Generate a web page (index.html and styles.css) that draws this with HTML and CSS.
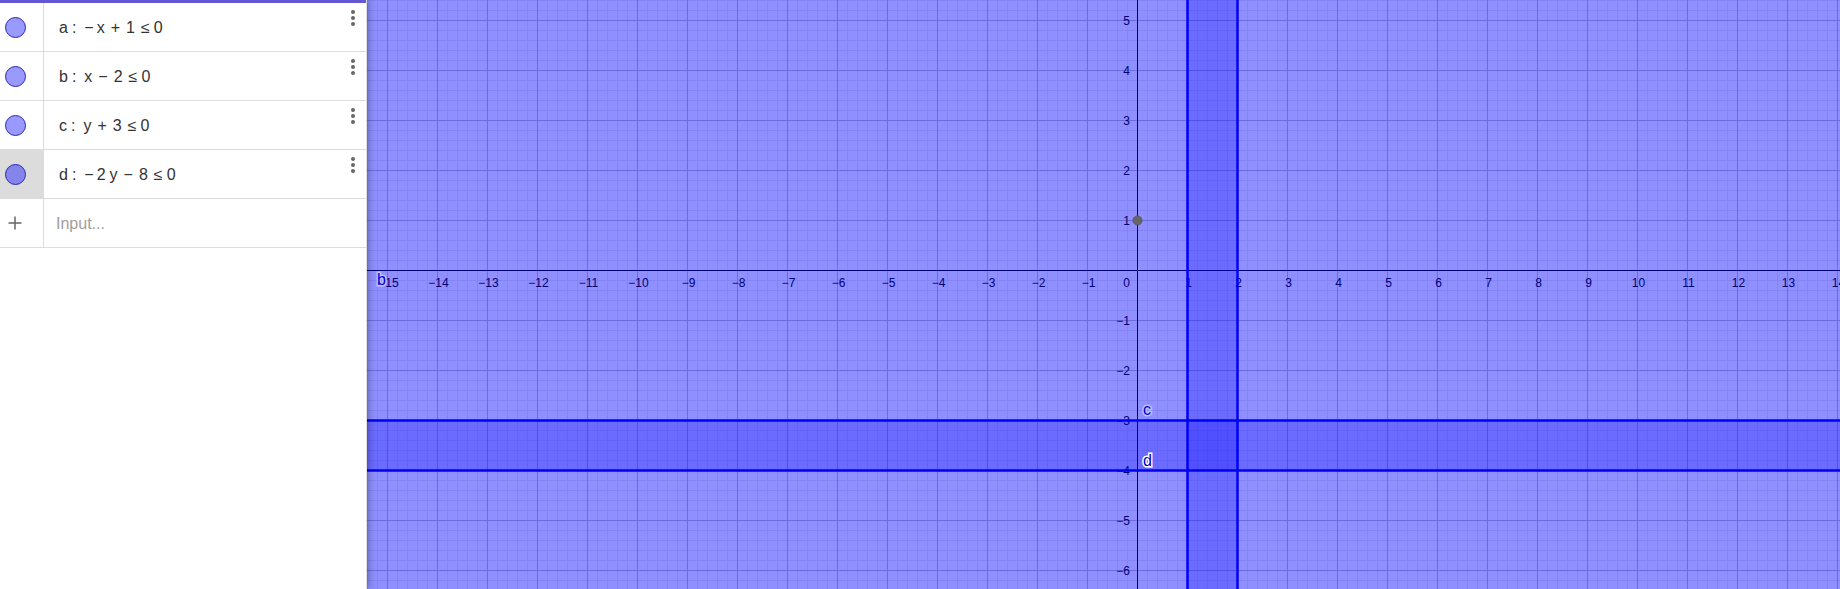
FILE: index.html
```html
<!DOCTYPE html>
<html lang="en">
<head>
    <meta charset="UTF-8">
    <title>Graphing - Inequalities</title>
    <link rel="stylesheet" href="styles.css">
</head>
<body>
    <div class="app">
        <aside class="algebra">
            <div class="topbar"></div>

            <div class="row">
                <div class="marble-cell"><span class="marble"></span></div>
                <div class="formula"><span class="name">a</span><span class="colon">:</span><span class="neg">−</span>x<span class="op">+</span>1<span class="rel">≤</span>0</div>
                <div class="more"><i></i><i></i><i></i></div>
            </div>
            <div class="row">
                <div class="marble-cell"><span class="marble"></span></div>
                <div class="formula"><span class="name">b</span><span class="colon">:</span>x<span class="op">−</span>2<span class="rel">≤</span>0</div>
                <div class="more"><i></i><i></i><i></i></div>
            </div>
            <div class="row">
                <div class="marble-cell"><span class="marble"></span></div>
                <div class="formula"><span class="name">c</span><span class="colon">:</span>y<span class="op">+</span>3<span class="rel">≤</span>0</div>
                <div class="more"><i></i><i></i><i></i></div>
            </div>
            <div class="row selected">
                <div class="marble-cell"><span class="marble"></span></div>
                <div class="formula"><span class="name">d</span><span class="colon">:</span><span class="neg">−</span>2<span class="var">y</span><span class="op">−</span>8<span class="rel">≤</span>0</div>
                <div class="more"><i></i><i></i><i></i></div>
            </div>
            <div class="row input-row">
                <div class="marble-cell">
                    <svg class="plus" width="14" height="14" viewBox="0 0 14 14">
                        <path d="M0.5 7 H13.5 M7 0.5 V13.5" stroke="#666" stroke-width="1.5" fill="none"/>
                    </svg>
                </div>
                <div class="formula placeholder">Input...</div>
            </div>
        </aside>

        <main class="graph">
            <svg width="1473" height="589" viewBox="0 0 1473 589">
                <defs>
                    <pattern id="minor" width="10" height="10" patternUnits="userSpaceOnUse">
                        <rect x="0" y="0" width="10" height="1" fill="#ebebeb"/>
                        <rect x="0" y="0" width="1" height="10" fill="#ebebeb"/>
                    </pattern>
                    <pattern id="major" x="20" y="20" width="50" height="50" patternUnits="userSpaceOnUse">
                        <rect x="0" y="0" width="50" height="1" fill="#c0c0c0"/>
                        <rect x="0" y="0" width="1" height="50" fill="#c0c0c0"/>
                    </pattern>
                </defs>

                <rect width="1473" height="589" fill="#fff"/>
                <rect width="1473" height="589" fill="url(#minor)"/>
                <rect width="1473" height="589" fill="url(#major)"/>

                <!-- axes -->
                <rect x="770" y="0" width="1" height="589" fill="#000"/>
                <rect x="0" y="270" width="1473" height="1" fill="#000"/>

                <g class="tick x-ticks">
                    <text x="21.5" y="287">−15</text>
                    <text x="71.5" y="287">−14</text>
                    <text x="121.5" y="287">−13</text>
                    <text x="171.5" y="287">−12</text>
                    <text x="221.5" y="287">−11</text>
                    <text x="271.5" y="287">−10</text>
                    <text x="321.5" y="287">−9</text>
                    <text x="371.5" y="287">−8</text>
                    <text x="421.5" y="287">−7</text>
                    <text x="471.5" y="287">−6</text>
                    <text x="521.5" y="287">−5</text>
                    <text x="571.5" y="287">−4</text>
                    <text x="621.5" y="287">−3</text>
                    <text x="671.5" y="287">−2</text>
                    <text x="721.5" y="287">−1</text>
                    <text x="821.5" y="287">1</text>
                    <text x="871.5" y="287">2</text>
                    <text x="921.5" y="287">3</text>
                    <text x="971.5" y="287">4</text>
                    <text x="1021.5" y="287">5</text>
                    <text x="1071.5" y="287">6</text>
                    <text x="1121.5" y="287">7</text>
                    <text x="1171.5" y="287">8</text>
                    <text x="1221.5" y="287">9</text>
                    <text x="1271.5" y="287">10</text>
                    <text x="1321.5" y="287">11</text>
                    <text x="1371.5" y="287">12</text>
                    <text x="1421.5" y="287">13</text>
                    <text x="1471.5" y="287">14</text>
                </g>
                <g class="tick y-ticks">
                    <text x="763" y="25">5</text>
                    <text x="763" y="75">4</text>
                    <text x="763" y="125">3</text>
                    <text x="763" y="175">2</text>
                    <text x="763" y="225">1</text>
                    <text x="763" y="287">0</text>
                    <text x="763" y="325">−1</text>
                    <text x="763" y="375">−2</text>
                    <text x="763" y="425">−3</text>
                    <text x="763" y="475">−4</text>
                    <text x="763" y="525">−5</text>
                    <text x="763" y="575">−6</text>
                </g>

                <!-- a: -x + 1 <= 0 -->
                <rect class="region" x="820.5" y="0" width="652.5" height="589"/>
                <line class="border" x1="820.5" y1="0" x2="820.5" y2="589"/>

                <!-- b: x - 2 <= 0 -->
                <rect class="region" x="0" y="0" width="870.5" height="589"/>
                <line class="border" x1="870.5" y1="0" x2="870.5" y2="589"/>
                <text class="obj-label" x="10" y="285">b</text>

                <!-- c: y + 3 <= 0 -->
                <rect class="region" x="0" y="420.5" width="1473" height="168.5"/>
                <line class="border" x1="0" y1="420.5" x2="1473" y2="420.5"/>
                <text class="obj-label" x="776" y="415">c</text>

                <!-- d: -2y - 8 <= 0 -->
                <rect class="region" x="0" y="0" width="1473" height="470.5"/>
                <line class="border" x1="0" y1="470.5" x2="1473" y2="470.5"/>
                <text class="obj-label" x="776" y="466">d</text>

                <circle cx="770.5" cy="220.5" r="4.6" fill="#666" stroke="#555" stroke-width="0.8"/>
            </svg>
        </main>
    </div>
</body>
</html>
```

FILE: styles.css
```css
html, body {
    margin: 0;
    padding: 0;
    height: 100%;
    overflow: hidden;
    background: #fff;
    font-family: "Liberation Sans", Arial, sans-serif;
}

.app {
    display: flex;
    height: 589px;
}

.algebra {
    position: relative;
    z-index: 2;
    width: 366px;
    flex-shrink: 0;
    display: flex;
    flex-direction: column;
    background: #fff;
    border-right: 1px solid #e0e0e0;
    box-shadow: 2px 0 7px rgba(0, 0, 0, 0.28);
}

.topbar {
    height: 3px;
    background: #6557d2;
}

.row {
    display: flex;
    height: 48px;
    border-bottom: 1px solid #dcdcdc;
}

.marble-cell {
    width: 43px;
    flex-shrink: 0;
    display: flex;
    align-items: center;
    border-right: 1px solid #dcdcdc;
}

.selected .marble-cell {
    background: #dcdcdc;
}

.marble {
    width: 19px;
    height: 19px;
    margin-left: 5px;
    border-radius: 50%;
    border: 1px solid #2727b8;
    background: rgba(0, 0, 255, 0.4);
}

.formula {
    flex: 1;
    display: flex;
    align-items: center;
    padding-left: 15px;
    padding-top: 1px;
    font-size: 16px;
    color: #333;
    white-space: pre;
}

.colon {
    margin: 0 8px 0 4px;
}

.neg {
    margin-right: 3px;
}

.op {
    margin: 0 6px;
}

.rel {
    margin: 0 4px 0 6px;
}

.var {
    margin-left: 4px;
}

.more {
    display: flex;
    flex-direction: column;
    gap: 2px;
    margin: 7px 11px 0 0;
}

.more i {
    width: 4px;
    height: 4px;
    border-radius: 50%;
    background: #666;
}

.plus {
    margin-left: 8px;
}

.placeholder {
    padding-left: 12px;
    color: #9e9e9e;
}

.graph {
    flex: 1;
    overflow: hidden;
}

.graph svg {
    display: block;
}

.tick text {
    font-family: "Liberation Sans", Arial, sans-serif;
    font-size: 12px;
    fill: #000;
}

.x-ticks text {
    text-anchor: middle;
}

.y-ticks text {
    text-anchor: end;
}

.region {
    fill: #0000ff;
    fill-opacity: 0.25;
}

.border {
    stroke: #0000f0;
    stroke-width: 2.5;
}

.obj-label {
    font-family: "Liberation Sans", Arial, sans-serif;
    font-size: 16px;
    fill: #0000c8;
    stroke: #fff;
    stroke-width: 3px;
    paint-order: stroke;
}
```
